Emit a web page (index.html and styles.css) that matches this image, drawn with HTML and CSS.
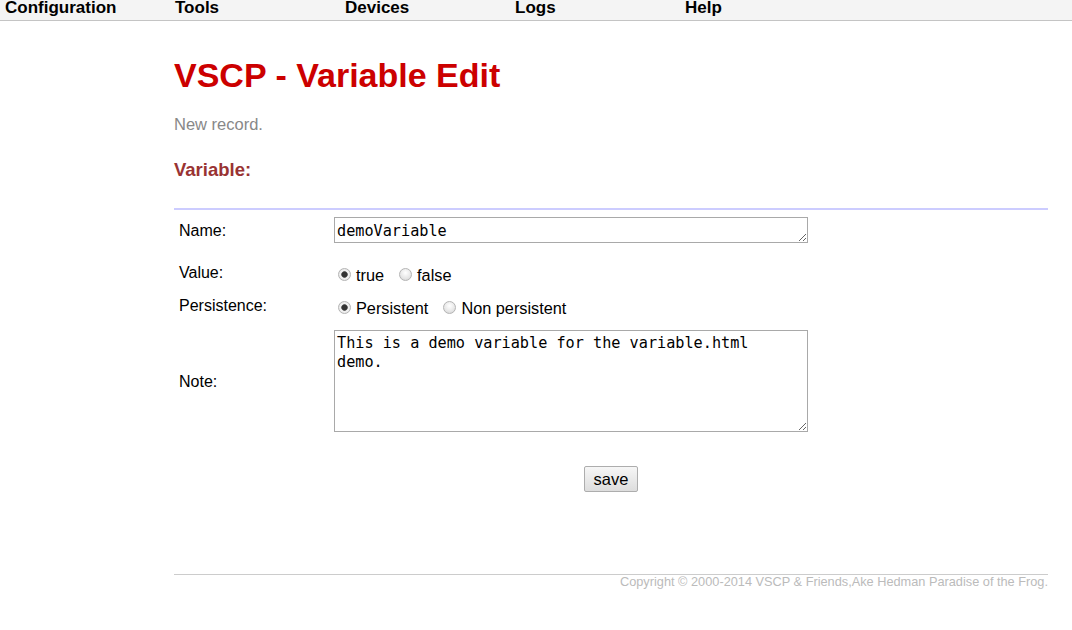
FILE: index.html
```html
<!DOCTYPE html>
<html>
<head>
<meta charset="utf-8">
<title>VSCP - Variable Edit</title>
<link rel="stylesheet" href="styles.css">
</head>
<body>
<nav class="topnav">
  <a class="nav-item">Configuration</a>
  <a class="nav-item">Tools</a>
  <a class="nav-item">Devices</a>
  <a class="nav-item">Logs</a>
  <a class="nav-item">Help</a>
</nav>
<main class="content">
  <h1 class="title">VSCP - Variable Edit</h1>
  <p class="status">New record.</p>
  <h2 class="section">Variable:</h2>
  <div class="divider"></div>
  <form class="form">
    <div class="row row-name">
      <label class="label">Name:</label>
      <textarea class="field field-name" rows="1">demoVariable</textarea>
    </div>
    <div class="row row-value">
      <span class="label">Value:</span>
      <div class="radios">
        <label class="radio"><input type="radio" name="value" checked><span>true</span></label>
        <label class="radio"><input type="radio" name="value"><span>false</span></label>
      </div>
    </div>
    <div class="row row-persist">
      <span class="label">Persistence:</span>
      <div class="radios">
        <label class="radio"><input type="radio" name="persist" checked><span>Persistent</span></label>
        <label class="radio"><input type="radio" name="persist"><span>Non persistent</span></label>
      </div>
    </div>
    <div class="row row-note">
      <label class="label">Note:</label>
      <textarea class="field field-note">This is a demo variable for the variable.html demo.</textarea>
    </div>
    <div class="actions">
      <button type="button" class="btn">save</button>
    </div>
  </form>
  <footer class="footer">Copyright © 2000-2014 VSCP &amp; Friends,Ake Hedman Paradise of the Frog.</footer>
</main>
</body>
</html>
```
FILE: styles.css
```css
html, body {
  margin: 0;
  padding: 0;
  background: #ffffff;
  font-family: "Liberation Sans", Arial, sans-serif;
  color: #000;
}

.topnav {
  display: flex;
  height: 20px;
  background: #f4f4f4;
  border-bottom: 1px solid #c4c4c4;
  padding-left: 5px;
}

.nav-item {
  width: 170px;
  flex: none;
  font-size: 17px;
  font-weight: bold;
  line-height: 15px;
  color: #000;
}

.content {
  padding: 0 24px 0 174px;
}

.title {
  margin: 36px 0 0;
  font-size: 34px;
  line-height: 36px;
  font-weight: bold;
  color: #cc0000;
}

.status {
  margin: 23px 0 0;
  font-size: 16.5px;
  line-height: 16px;
  color: #888888;
}

.section {
  margin: 29px 0 0;
  font-size: 18.5px;
  line-height: 18px;
  font-weight: bold;
  color: #993333;
}

.divider {
  margin-top: 29px;
  height: 2px;
  background: #ccccff;
}

.form {
  margin: 0;
}

.row {
  display: flex;
  align-items: flex-start;
}

.label {
  width: 155px;
  flex: none;
  padding-left: 5px;
  font-size: 16px;
  color: #000;
}

.row-name {
  margin-top: 7px;
}

.row-name .label {
  line-height: 26px;
  padding-top: 1px;
}

.row-value {
  margin-top: 17px;
}

.row-value .label,
.row-persist .label {
  line-height: 24px;
}

.row-persist {
  margin-top: 8px;
}

.row-note {
  margin-top: 11px;
  align-items: center;
}

.row-note .label {
  line-height: 20px;
  padding-top: 1px;
}

.field {
  box-sizing: border-box;
  width: 474px;
  border: 1px solid #a9a9a9;
  padding: 2px 2px;
  margin: 0;
  font-family: "DejaVu Sans Mono", monospace;
  font-size: 15.2px;
  color: #000;
  background: #fff;
  outline: none;
}

.field-name {
  height: 26px;
  line-height: 19px;
  padding-top: 4px;
  overflow: hidden;
}

.field-note {
  height: 102px;
  line-height: 19px;
  padding-top: 3px;
  padding-right: 12px;
}

.radios {
  display: flex;
  gap: 11px;
  padding-top: 3px;
}

.radio {
  display: flex;
  align-items: center;
  gap: 5px;
  font-size: 16.3px;
  line-height: 22px;
  padding-left: 4px;
}

.radio input {
  -webkit-appearance: none;
  appearance: none;
  width: 13px;
  height: 13px;
  margin: 0;
  border-radius: 50%;
  border: 1px solid #b4b4b4;
  box-sizing: border-box;
  background: radial-gradient(circle at 50% 35%, #ffffff 0%, #e6e6e6 60%, #d0d0d0 100%);
  position: relative;
  top: -1px;
}

.radio input:checked {
  background: radial-gradient(circle, #333333 0 2.4px, #666 3px, #e8e8e8 3.6px, #f2f2f2 55%, #d4d4d4 100%);
}

.actions {
  display: flex;
  justify-content: center;
  margin-top: 34px;
}

.btn {
  width: 54px;
  height: 26px;
  padding: 0;
  font-family: "Liberation Sans", Arial, sans-serif;
  font-size: 16.5px;
  color: #000;
  border: 1px solid #adadad;
  border-radius: 2px;
  background: linear-gradient(#f6f6f6, #dddddd);
}

.footer {
  margin-top: 82px;
  border-top: 1px solid #cccccc;
  text-align: right;
  font-size: 12.75px;
  line-height: 14px;
  color: #bbbbbb;
}
```
